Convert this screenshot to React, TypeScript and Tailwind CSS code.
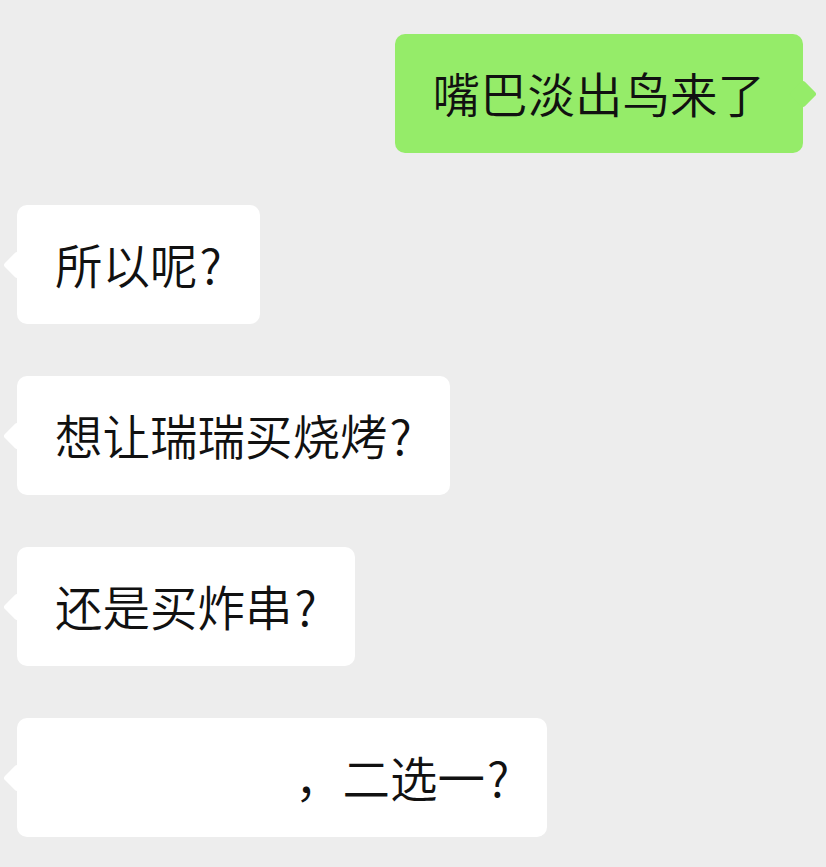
const font = { fontFamily: '"Noto Sans CJK SC", "Noto Sans", sans-serif' };

function LeftBubble({ children }: { children: React.ReactNode }) {
  return (
    <div className="flex pl-[17px]">
      <div className="relative flex h-[119px] items-center rounded-[10px] bg-white px-[38px]">
        <div className="absolute left-[-10px] top-1/2 h-[20px] w-[20px] -translate-y-1/2 rotate-45 rounded-[3px] bg-white" />
        <span className="relative -mt-[2px] text-[47.5px] font-[350] leading-none text-[#111111]">{children}</span>
      </div>
    </div>
  );
}

function RightBubble({ children }: { children: React.ReactNode }) {
  return (
    <div className="flex justify-end pr-[23px]">
      <div className="relative flex h-[119px] items-center rounded-[10px] bg-[#95ec69] px-[38px]">
        <div className="absolute right-[-10px] top-1/2 h-[20px] w-[20px] -translate-y-1/2 rotate-45 rounded-[3px] bg-[#95ec69]" />
        <span className="relative -mt-[2px] text-[47.5px] font-[350] leading-none text-[#111111]">{children}</span>
      </div>
    </div>
  );
}

export default function App() {
  return (
    <div className="min-h-[867px] w-full bg-[#ededed] pt-[34px] pb-[30px]" style={font}>
      <div className="flex flex-col gap-[52px]">
        <RightBubble>嘴巴淡出鸟来了</RightBubble>
        <LeftBubble>所以呢<span className="ml-[2px]">?</span></LeftBubble>
        <LeftBubble>想让瑞瑞买烧烤<span className="ml-[2px]">?</span></LeftBubble>
        <LeftBubble>还是买炸串<span className="ml-[2px]">?</span></LeftBubble>
        <LeftBubble>
          <span className="inline-block w-[240px]" />
          ，二选一<span className="ml-[2px]">?</span>
        </LeftBubble>
      </div>
    </div>
  );
}
